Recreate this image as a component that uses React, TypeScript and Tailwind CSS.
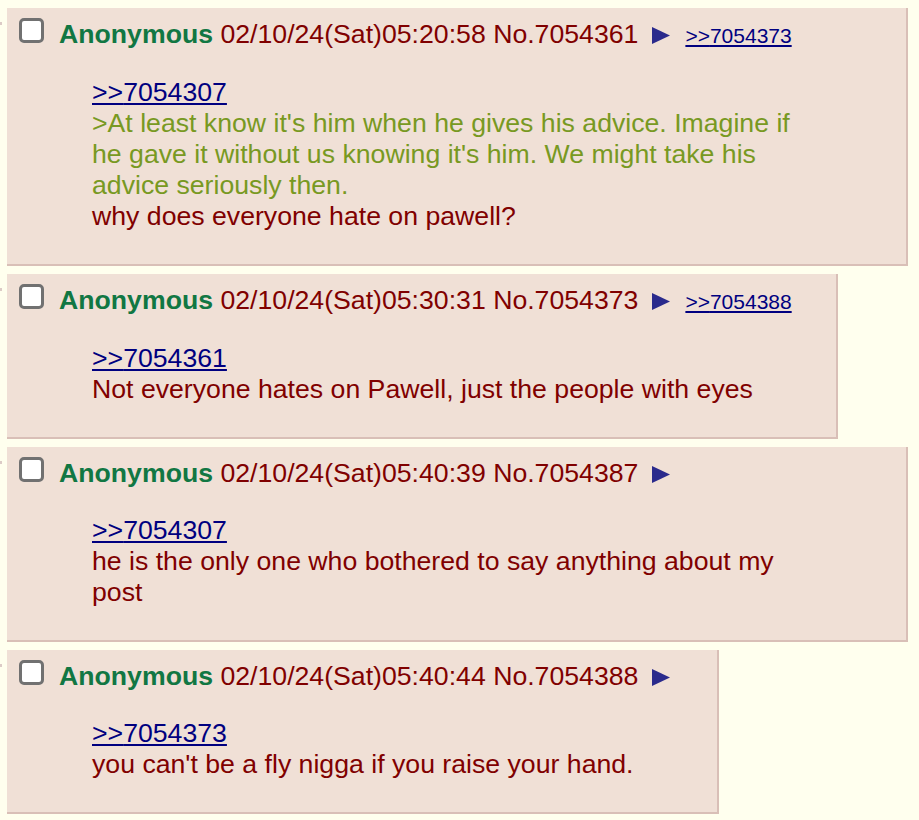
type Line = { text: string; green?: boolean };

type Post = {
  date: string;
  no: string;
  replies: string[];
  quote: string;
  lines: Line[];
};

const posts: Post[] = [
  {
    date: "02/10/24(Sat)05:20:58",
    no: "7054361",
    replies: ["7054373"],
    quote: "7054307",
    lines: [
      {
        text: ">At least know it's him when he gives his advice. Imagine if he gave it without us knowing it's him. We might take his advice seriously then.",
        green: true,
      },
      { text: "why does everyone hate on pawell?" },
    ],
  },
  {
    date: "02/10/24(Sat)05:30:31",
    no: "7054373",
    replies: ["7054388"],
    quote: "7054361",
    lines: [{ text: "Not everyone hates on Pawell, just the people with eyes" }],
  },
  {
    date: "02/10/24(Sat)05:40:39",
    no: "7054387",
    replies: [],
    quote: "7054307",
    lines: [{ text: "he is the only one who bothered to say anything about my post" }],
  },
  {
    date: "02/10/24(Sat)05:40:44",
    no: "7054388",
    replies: [],
    quote: "7054373",
    lines: [{ text: "you can't be a fly nigga if you raise your hand." }],
  },
];

function MenuArrow() {
  return (
    <svg width="18" height="17" viewBox="0 0 18 17" className="inline-block ml-[14px]">
      <path d="M0 0 L18 8.5 L0 17 Z" fill="#2a2a8c" />
    </svg>
  );
}

function Reply({ post }: { post: Post }) {
  return (
    <div className="bg-[#f0e0d6] border-r-2 border-b-2 border-[#d9bfb7]">
      <div className="flex items-start">
        <div className="mt-[10px] ml-[12px] w-[25px] h-[25px] shrink-0 rounded-[5px] border-[3px] border-[#717171] bg-white" />
        <div className="mt-[11px] ml-[15px] mr-[10px] leading-[31px] whitespace-nowrap text-[#800000]">
          <span className="font-bold text-[#117743]">Anonymous</span> <span>{post.date}</span>{" "}
          <span>No.{post.no}</span>
          <MenuArrow />
          {post.replies.map((r) => (
            <a key={r} href="#" className="ml-[15px] text-[21px] text-[#000080] underline">
              &gt;&gt;{r}
            </a>
          ))}
        </div>
      </div>
      <blockquote className="mt-[26px] mb-[32px] ml-[85px] mr-[83px] leading-[31px] text-[#800000]">
        <a href="#" className="text-[#000080] underline">
          &gt;&gt;{post.quote}
        </a>
        {post.lines.map((l, i) => (
          <div key={i} className={l.green ? "text-[#789922]" : ""}>
            {l.text}
          </div>
        ))}
      </blockquote>
    </div>
  );
}

export default function App() {
  return (
    <div className="min-h-screen bg-[#ffffee] pt-[8px] font-['Liberation_Sans',Arial,sans-serif] text-[26.67px]">
      <div className="flex flex-col items-start gap-[8px] w-[908px]">
        {posts.map((p) => (
          <div key={p.no} className="flex items-start max-w-full">
            <div className="w-[7px] shrink-0">
              <span className="block mt-[14px] w-[2px] h-[3px] bg-[#dccbc6]" />
            </div>
            <Reply post={p} />
          </div>
        ))}
      </div>
    </div>
  );
}
